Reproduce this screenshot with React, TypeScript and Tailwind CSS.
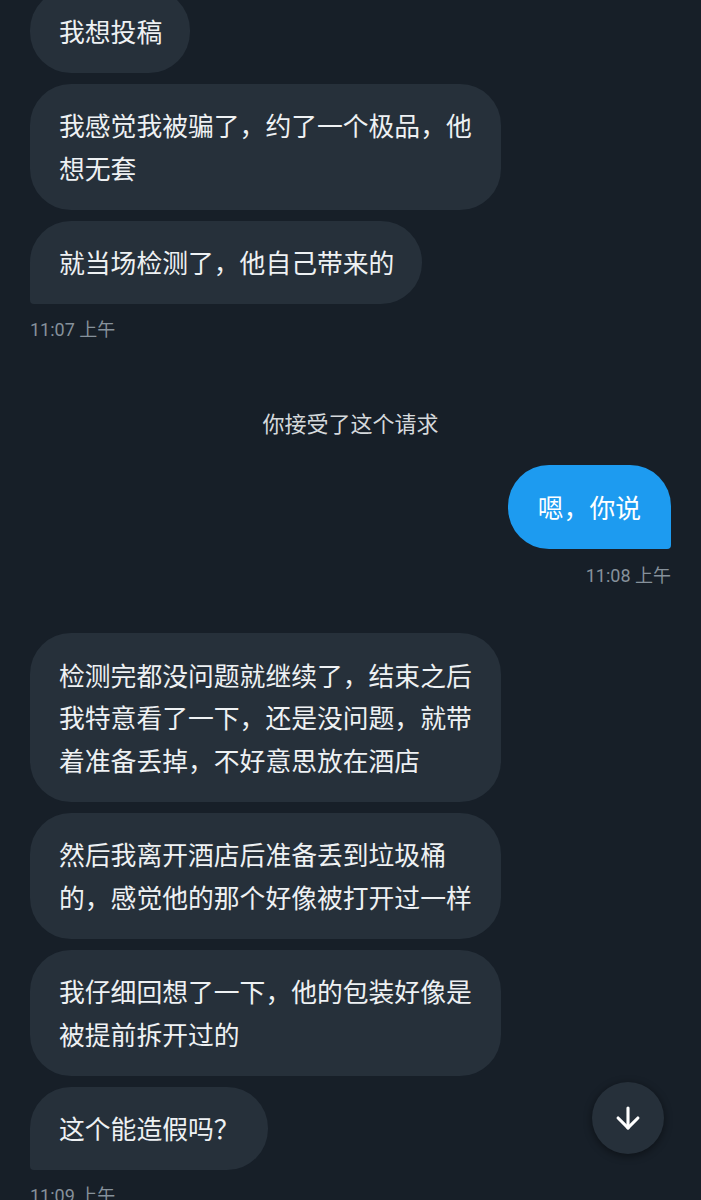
import { ArrowDown } from "lucide-react";
import clsx from "clsx";

const cjk = { fontFamily: '"Noto Sans CJK SC", "Noto Sans", sans-serif' };
const meta = { fontFamily: 'Roboto, "Noto Sans CJK SC", sans-serif' };

function Bubble({ text, last, wide }: { text: string; last?: boolean; wide?: boolean }) {
  return (
    <div
      className={clsx(
        "self-start bg-[#26303a] text-[#eef1f3] rounded-[41px] pl-[29px] pr-[28px] py-[20.5px] text-[25.8px] leading-[42.5px]",
        wide ? "w-[471px]" : "max-w-[471px]",
        last && "rounded-bl-[4px]"
      )}
      style={cjk}
    >
      {text}
    </div>
  );
}

function Stamp({ children, right }: { children: string; right?: boolean }) {
  return (
    <div
      className={clsx("text-[18px] leading-[20px] text-[#86919b]", right && "self-end")}
      style={meta}
    >
      {children}
    </div>
  );
}

export default function App() {
  return (
    <div className="relative w-[701px] h-[1200px] overflow-hidden bg-[#171f28]">
      <div className="flex flex-col px-[30px] mt-[-11px]">
        <div className="flex flex-col gap-[11px]">
          <Bubble text="我想投稿" />
          <Bubble text="我感觉我被骗了，约了一个极品，他想无套" wide />
          <Bubble text="就当场检测了，他自己带来的" last />
        </div>

        <div className="mt-[16px]">
          <Stamp>11:07 上午</Stamp>
        </div>

        <div
          className="mt-[67px] self-center text-[22px] leading-[30px] text-[#d5d9dc]"
          style={cjk}
        >
          你接受了这个请求
        </div>

        <div
          className="mt-[28px] self-end bg-[#1d9bf0] text-white rounded-[41px] rounded-br-[4px] px-[30px] py-[20.5px] text-[25.8px] leading-[42.5px]"
          style={cjk}
        >
          嗯，你说
        </div>

        <div className="mt-[17.5px] flex flex-col">
          <Stamp right>11:08 上午</Stamp>
        </div>

        <div className="mt-[47px] flex flex-col gap-[11px]">
          <Bubble text="检测完都没问题就继续了，结束之后我特意看了一下，还是没问题，就带着准备丢掉，不好意思放在酒店" wide />
          <Bubble text="然后我离开酒店后准备丢到垃圾桶的，感觉他的那个好像被打开过一样" wide />
          <Bubble text="我仔细回想了一下，他的包装好像是被提前拆开过的" wide />
          <Bubble text="这个能造假吗？" last />
        </div>

        <div className="mt-[16px]">
          <Stamp>11:09 上午</Stamp>
        </div>
      </div>

      <button className="absolute left-[592px] top-[1082px] w-[72px] h-[72px] rounded-full bg-[#26303a] flex items-center justify-center shadow-[0_2px_8px_rgba(0,0,0,0.45)]">
        <ArrowDown className="w-[34px] h-[34px] text-white" strokeWidth={2.2} />
      </button>
    </div>
  );
}
